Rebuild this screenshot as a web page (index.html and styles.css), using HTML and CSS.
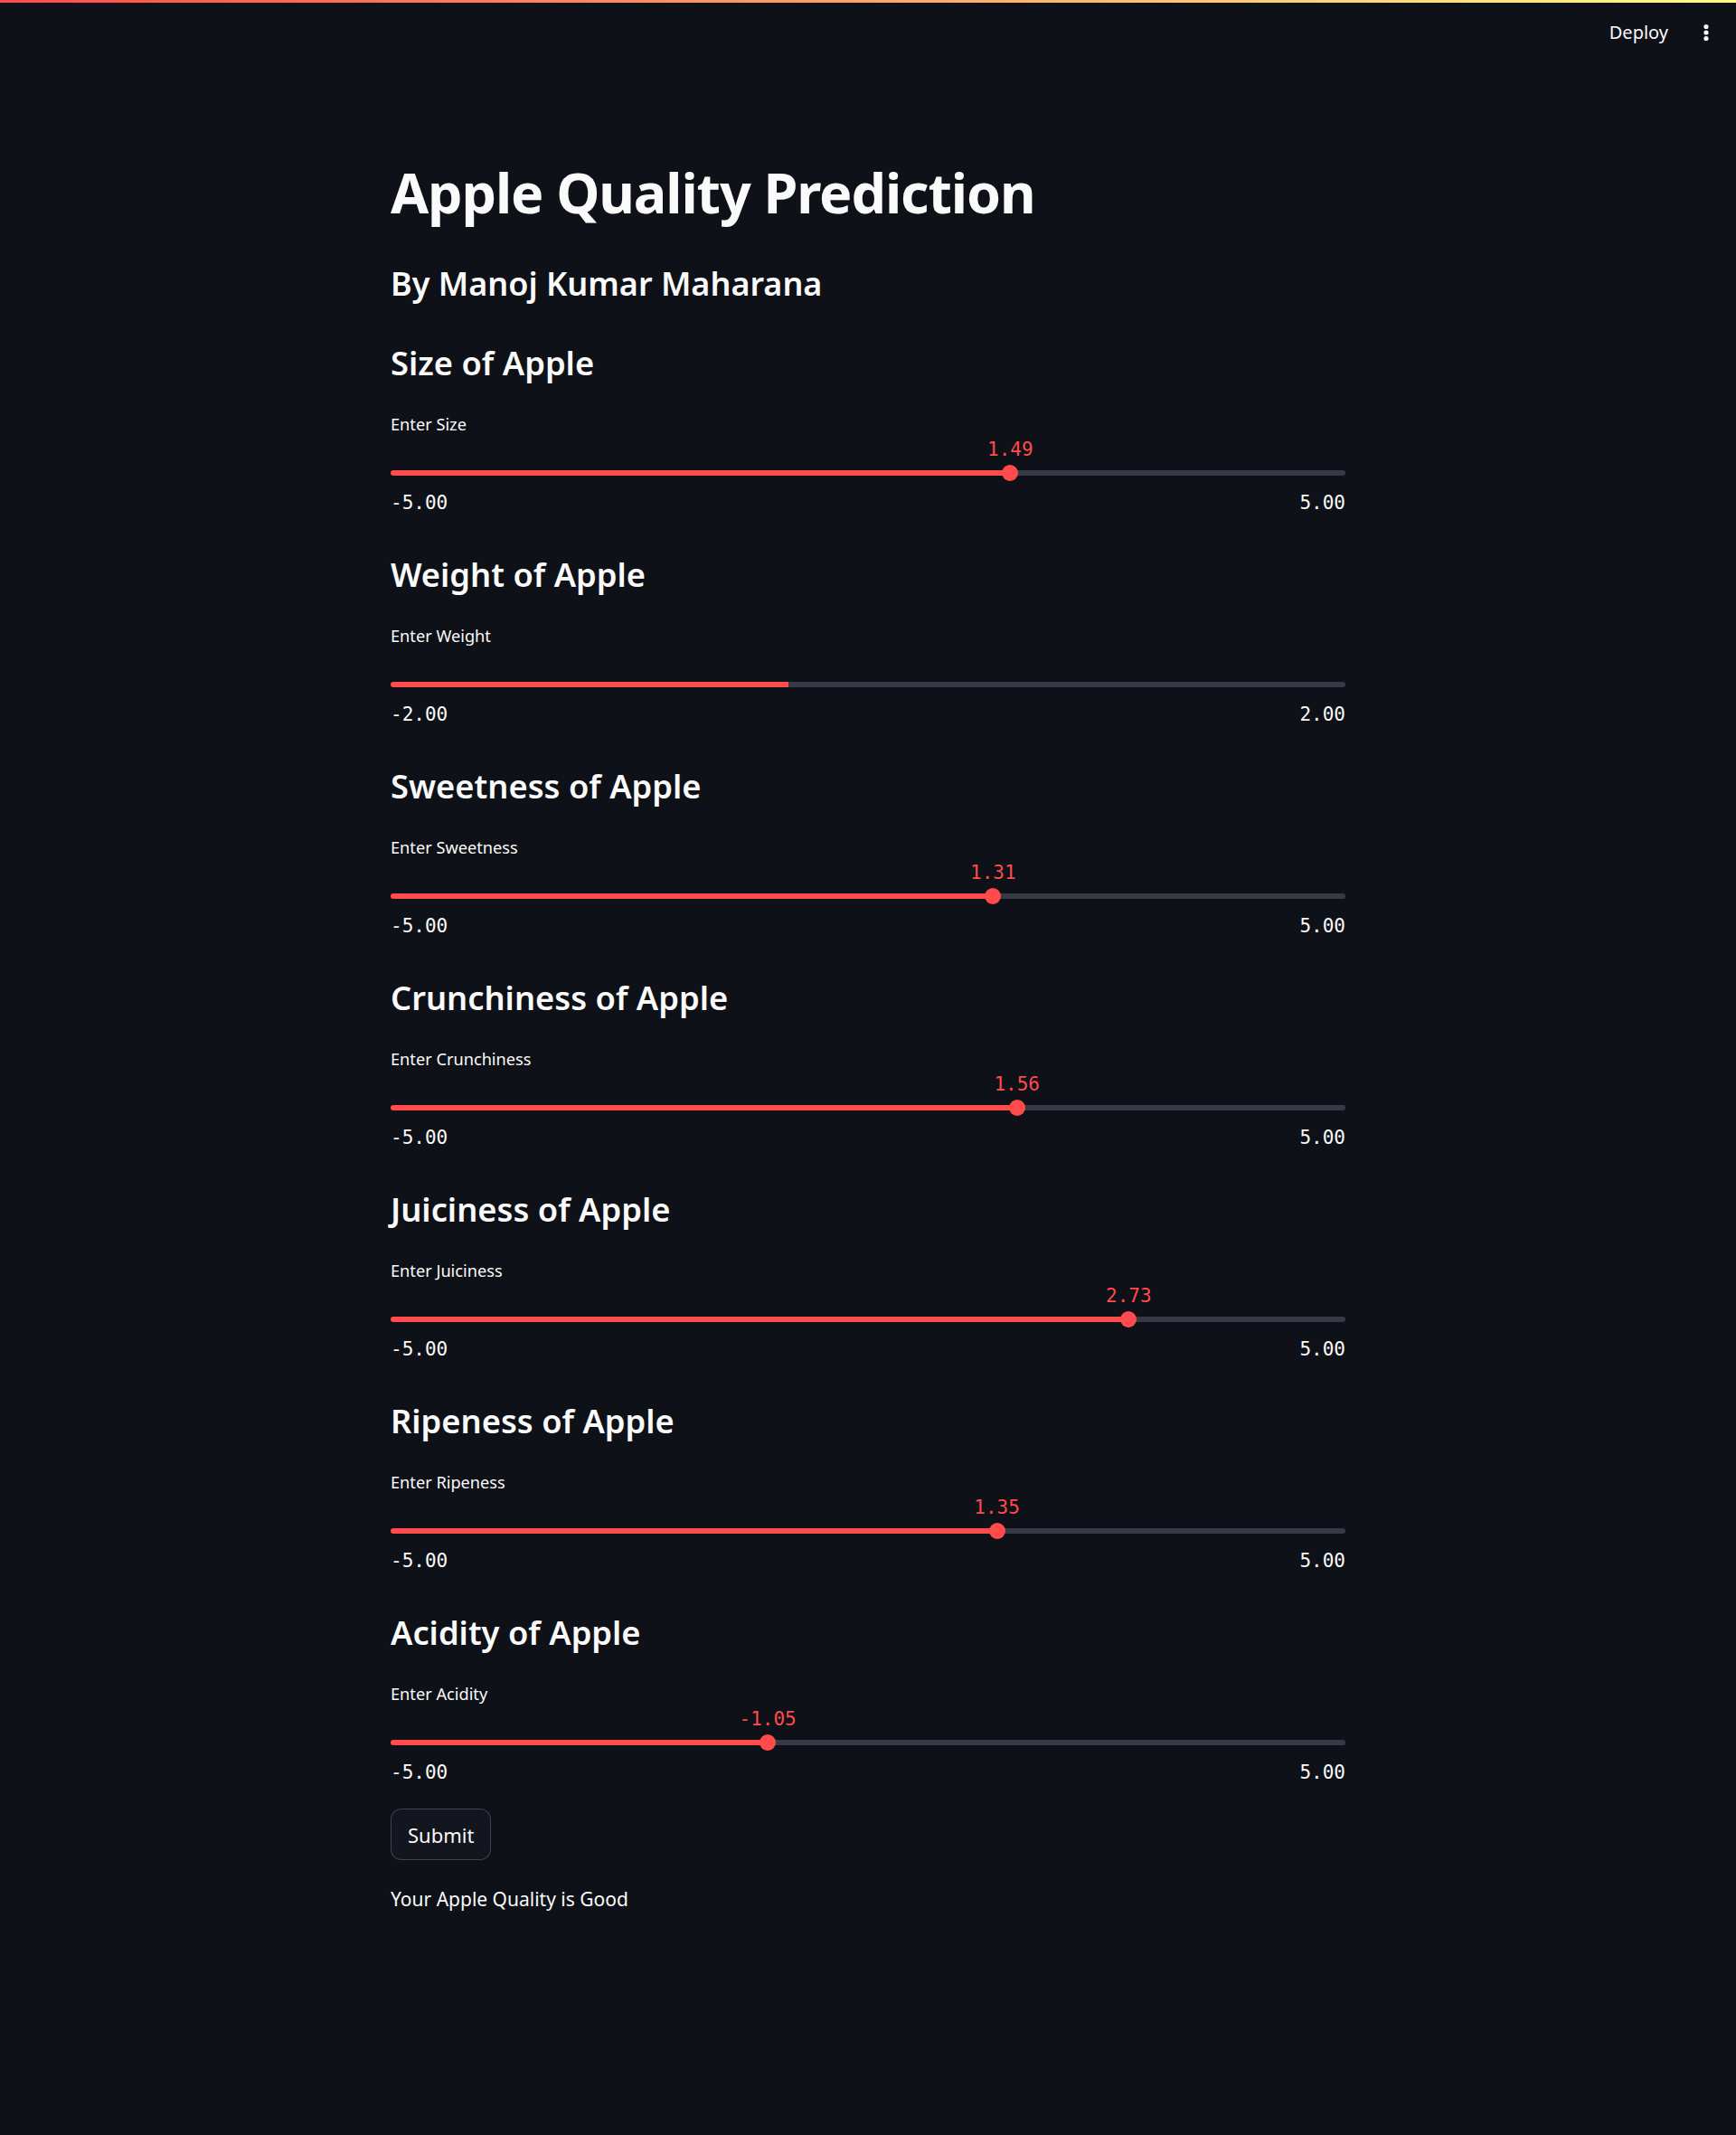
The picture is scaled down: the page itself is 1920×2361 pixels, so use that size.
FILE: index.html
```html
<!DOCTYPE html>
<html lang="en">
<head>
<meta charset="utf-8">
<title>Apple Quality Prediction</title>
<link rel="stylesheet" href="styles.css">
</head>
<body>
<div class="decoration"></div>
<header class="header">
  <span class="deploy">Deploy</span>
  <svg class="kebab" width="24" height="24" viewBox="0 0 24 24" aria-hidden="true">
    <circle cx="12" cy="5.5" r="2.6" fill="#fafafa"/>
    <circle cx="12" cy="12" r="2.6" fill="#fafafa"/>
    <circle cx="12" cy="18.5" r="2.6" fill="#fafafa"/>
  </svg>
</header>
<main class="main">
  <h1 class="title">Apple Quality Prediction</h1>
  <h3 class="subtitle">By Manoj Kumar Maharana</h3>

  <section class="section">
    <h3 class="heading">Size of Apple</h3>
    <div class="label">Enter Size</div>
    <div class="slider" style="--p:64.9%">
      <div class="track"></div>
      <div class="thumb"></div>
      <div class="value">1.49</div>
    </div>
    <div class="ticks"><span>-5.00</span><span>5.00</span></div>
  </section>

  <section class="section">
    <h3 class="heading">Weight of Apple</h3>
    <div class="label">Enter Weight</div>
    <div class="slider" style="--p:41.7%">
      <div class="track"></div>
    </div>
    <div class="ticks"><span>-2.00</span><span>2.00</span></div>
  </section>

  <section class="section">
    <h3 class="heading">Sweetness of Apple</h3>
    <div class="label">Enter Sweetness</div>
    <div class="slider" style="--p:63.1%">
      <div class="track"></div>
      <div class="thumb"></div>
      <div class="value">1.31</div>
    </div>
    <div class="ticks"><span>-5.00</span><span>5.00</span></div>
  </section>

  <section class="section">
    <h3 class="heading">Crunchiness of Apple</h3>
    <div class="label">Enter Crunchiness</div>
    <div class="slider" style="--p:65.6%">
      <div class="track"></div>
      <div class="thumb"></div>
      <div class="value">1.56</div>
    </div>
    <div class="ticks"><span>-5.00</span><span>5.00</span></div>
  </section>

  <section class="section">
    <h3 class="heading">Juiciness of Apple</h3>
    <div class="label">Enter Juiciness</div>
    <div class="slider" style="--p:77.3%">
      <div class="track"></div>
      <div class="thumb"></div>
      <div class="value">2.73</div>
    </div>
    <div class="ticks"><span>-5.00</span><span>5.00</span></div>
  </section>

  <section class="section">
    <h3 class="heading">Ripeness of Apple</h3>
    <div class="label">Enter Ripeness</div>
    <div class="slider" style="--p:63.5%">
      <div class="track"></div>
      <div class="thumb"></div>
      <div class="value">1.35</div>
    </div>
    <div class="ticks"><span>-5.00</span><span>5.00</span></div>
  </section>

  <section class="section">
    <h3 class="heading">Acidity of Apple</h3>
    <div class="label">Enter Acidity</div>
    <div class="slider" style="--p:39.5%">
      <div class="track"></div>
      <div class="thumb"></div>
      <div class="value">-1.05</div>
    </div>
    <div class="ticks"><span>-5.00</span><span>5.00</span></div>
  </section>

  <button class="submit" type="button">Submit</button>
  <p class="result">Your Apple Quality is Good</p>
</main>
</body>
</html>
```

FILE: styles.css
```css
html, body {
  margin: 0;
  padding: 0;
}

body {
  background: #0e1117;
  color: #fafafa;
  font-family: "Noto Sans", "Open Sans", sans-serif;
  min-height: 2361px;
}

.decoration {
  height: 3px;
  background: linear-gradient(90deg, #ff4b4b, #fffd80);
}

.header {
  height: 66px;
  display: flex;
  justify-content: flex-end;
  align-items: center;
  gap: 30px;
  padding-right: 21px;
}

.deploy {
  font-size: 20px;
  line-height: 30px;
  color: #fafafa;
}

.kebab {
  display: block;
}

.main {
  width: 1056px;
  margin: 0 auto;
  padding-top: 104px;
}

.title {
  margin: 0;
  font-size: 61px;
  line-height: 80px;
  font-weight: 700;
  letter-spacing: -1.1px;
}

.subtitle {
  margin: 36px 0 0;
  font-size: 36px;
  line-height: 50px;
  font-weight: 600;
}

.section {
  margin-top: 39px;
}

.section:first-of-type {
  margin-top: 37px;
}

.heading {
  margin: 0;
  font-size: 36.3px;
  line-height: 50px;
  font-weight: 600;
}

.label {
  margin-top: 29px;
  font-size: 18.2px;
  line-height: 28px;
}

.slider {
  position: relative;
  height: 36px;
  margin-top: 22px;
  display: flex;
  align-items: center;
}

.track {
  flex: 1;
  height: 6px;
  border-radius: 3px;
  background: linear-gradient(90deg, #ff4b4b var(--p), #373944 var(--p));
}

.thumb {
  position: absolute;
  left: var(--p);
  top: 50%;
  width: 18px;
  height: 18px;
  border-radius: 50%;
  background: #ff4b4b;
  transform: translate(-50%, -50%);
}

.value {
  position: absolute;
  left: var(--p);
  top: -23px;
  transform: translateX(-50%);
  font-family: "DejaVu Sans Mono", monospace;
  font-size: 21px;
  line-height: 30px;
  color: #ff4b4b;
  white-space: nowrap;
}

.ticks {
  display: flex;
  justify-content: space-between;
  font-family: "DejaVu Sans Mono", monospace;
  font-size: 21px;
  line-height: 30px;
  color: #fafafa;
}

.submit {
  display: block;
  margin-top: 25px;
  height: 57px;
  padding: 0 18px;
  background: #13161e;
  color: #fafafa;
  border: 1px solid rgba(250, 250, 250, 0.2);
  border-radius: 12px;
  font-family: "Noto Sans", "Open Sans", sans-serif;
  font-size: 22px;
}

.result {
  margin: 26px 0 0;
  font-size: 21px;
  line-height: 34px;
}
```
